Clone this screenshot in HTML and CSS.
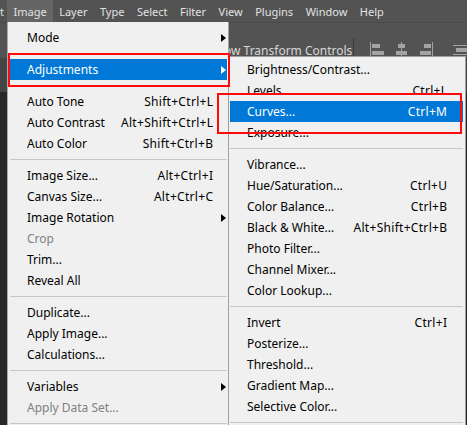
FILE: index.html
```html
<!DOCTYPE html>
<html>
<head>
<meta charset="utf-8">
<link rel="stylesheet" href="styles.css">
</head>
<body>
<div class="app">
  <nav class="menubar">
    <span class="mb-edge"><span class="mb-edge-text">Edit</span></span>
    <span class="mb-item active">Image</span>
    <span class="mb-item">Layer</span>
    <span class="mb-item">Type</span>
    <span class="mb-item">Select</span>
    <span class="mb-item">Filter</span>
    <span class="mb-item">View</span>
    <span class="mb-item">Plugins</span>
    <span class="mb-item">Window</span>
    <span class="mb-item">Help</span>
  </nav>
  <div class="options">
    <div class="opt-tool"></div>
    <span class="opt-label">Show Transform Controls</span>
    <span class="opt-div"></span>
    <svg class="align-icons" width="97" height="16" viewBox="0 0 97 16">
      <g fill="#a3a3a3">
        <rect x="0" y="0" width="1" height="16"/>
        <rect x="2" y="2" width="8" height="4"/>
        <rect x="2" y="9" width="12" height="4"/>
        <rect x="31" y="0" width="1" height="16"/>
        <rect x="28" y="2" width="7" height="4"/>
        <rect x="26" y="9" width="11" height="4"/>
        <rect x="62" y="0" width="1" height="16"/>
        <rect x="54" y="2" width="7" height="4"/>
        <rect x="50" y="9" width="11" height="4"/>
        <rect x="83" y="3" width="14" height="1"/>
        <rect x="86" y="6" width="11" height="4"/>
        <rect x="83" y="12" width="14" height="1"/>
      </g>
    </svg>
  </div>
  <div class="docbar"></div>
  <div class="workspace"></div>

  <div class="menu main-menu">
    <div class="mi">Mode<span class="arrow"></span></div>
    <div class="sep"></div>
    <div class="mi hl">Adjustments<span class="arrow"></span></div>
    <div class="sep"></div>
    <div class="mi">Auto Tone<span class="sc">Shift+Ctrl+L</span></div>
    <div class="mi">Auto Contrast<span class="sc">Alt+Shift+Ctrl+L</span></div>
    <div class="mi">Auto Color<span class="sc">Shift+Ctrl+B</span></div>
    <div class="sep"></div>
    <div class="mi">Image Size...<span class="sc">Alt+Ctrl+I</span></div>
    <div class="mi">Canvas Size...<span class="sc">Alt+Ctrl+C</span></div>
    <div class="mi">Image Rotation<span class="arrow"></span></div>
    <div class="mi dis">Crop</div>
    <div class="mi">Trim...</div>
    <div class="mi">Reveal All</div>
    <div class="sep"></div>
    <div class="mi">Duplicate...</div>
    <div class="mi">Apply Image...</div>
    <div class="mi">Calculations...</div>
    <div class="sep"></div>
    <div class="mi">Variables<span class="arrow"></span></div>
    <div class="mi dis">Apply Data Set...</div>
    <div class="sep"></div>
  </div>

  <div class="menu sub-menu">
    <div class="mi">Brightness/Contrast...</div>
    <div class="mi">Levels...<span class="sc">Ctrl+L</span></div>
    <div class="mi hl">Curves...<span class="sc">Ctrl+M</span></div>
    <div class="mi">Exposure...</div>
    <div class="sep"></div>
    <div class="mi">Vibrance...</div>
    <div class="mi">Hue/Saturation...<span class="sc">Ctrl+U</span></div>
    <div class="mi">Color Balance...<span class="sc">Ctrl+B</span></div>
    <div class="mi">Black &amp; White...<span class="sc">Alt+Shift+Ctrl+B</span></div>
    <div class="mi">Photo Filter...</div>
    <div class="mi">Channel Mixer...</div>
    <div class="mi">Color Lookup...</div>
    <div class="sep"></div>
    <div class="mi">Invert<span class="sc">Ctrl+I</span></div>
    <div class="mi">Posterize...</div>
    <div class="mi">Threshold...</div>
    <div class="mi">Gradient Map...</div>
    <div class="mi">Selective Color...</div>
    <div class="sep"></div>
  </div>

  <div class="callout callout-adj"></div>
  <div class="callout callout-curves"></div>
</div>
</body>
</html>
```

FILE: styles.css
```css
* { box-sizing: border-box; }
html, body { margin: 0; padding: 0; }
body {
  width: 467px;
  height: 425px;
  overflow: hidden;
  background: #282828;
  font-family: "Noto Sans", "Open Sans", sans-serif;
}
.app {
  position: relative;
  width: 467px;
  height: 425px;
  overflow: hidden;
  display: flex;
  flex-direction: column;
}

/* menu bar */
.menubar {
  height: 22px;
  flex: 0 0 22px;
  background: #535353;
  display: flex;
  align-items: stretch;
  font-size: 11px;
  color: #e2e2e2;
  white-space: nowrap;
}
.mb-edge {
  width: 7px;
  overflow: hidden;
  display: flex;
  justify-content: flex-end;
  align-items: center;
}
.mb-edge-text { padding-right: 3px; }
.mb-item {
  display: flex;
  align-items: center;
  padding: 0 6px 0 6.5px;
}
.mb-item.active { background: #656565; }

/* options bar */
.options {
  height: 36px;
  flex: 0 0 36px;
  background: #535353;
  border-top: 1px solid #4a4a4a;
  display: flex;
  align-items: center;
  padding-top: 19px;
  white-space: nowrap;
  font-size: 12px;
  color: #d8d8d8;
}
.opt-tool { flex: 0 0 210px; }
.opt-label { flex: 0 0 143px; }
.opt-div {
  flex: 0 0 1px;
  height: 24px;
  background: #3b3b3b;
  margin-right: 16px;
}
.align-icons { flex: 0 0 auto; }

.docbar {
  height: 34px;
  flex: 0 0 34px;
  background: #444444;
}
.workspace {
  flex: 1;
  background: #282828;
}

/* menus */
.menu {
  position: absolute;
  background: #f0f0f0;
  font-size: 12px;
  color: #000;
  white-space: nowrap;
}
.main-menu {
  left: 7px;
  top: 22px;
  width: 222px;
  height: 430px;
  border-left: 1px solid #a9a9a9;
  border-right: 1px solid #a0a0a0;
  padding-top: 5px;
}
.main-menu .mi { margin: 0 1px 0 2px; padding: 0 14px 0 17px; }
.main-menu .sep { margin: 5px 1px 5px 2px; }

.sub-menu {
  left: 228px;
  top: 56px;
  width: 238px;
  height: 400px;
  border: 1px solid #a0a0a0;
  padding-top: 2px;
}
.sub-menu .mi { margin: 0 2px 0 1px; padding: 0 16px 0 17px; }
.sub-menu .sep { margin: 5px 2px 5px 1px; }

.mi {
  height: 21px;
  display: flex;
  align-items: center;
  padding-top: 1px;
}
.mi .sc { margin-left: auto; letter-spacing: 0.3px; margin-right: -0.3px; }
.mi .arrow {
  margin-left: auto;
  margin-right: -13px;
  width: 0;
  height: 0;
  border-left: 5px solid #000;
  border-top: 4.5px solid transparent;
  border-bottom: 4.5px solid transparent;
}
.mi.hl { background: #0078d7; color: #fff; }
.mi.hl .arrow { border-left-color: #fff; }
.mi.dis { color: #808080; }
.sep {
  height: 1px;
  background: #c6c6c6;
}

/* red annotation boxes */
.callout {
  position: absolute;
  border: 2px solid #ff0a0a;
}
.callout-adj { left: 8px; top: 53px; width: 222px; height: 34px; }
.callout-curves { left: 217px; top: 93px; width: 245px; height: 41px; }
```
